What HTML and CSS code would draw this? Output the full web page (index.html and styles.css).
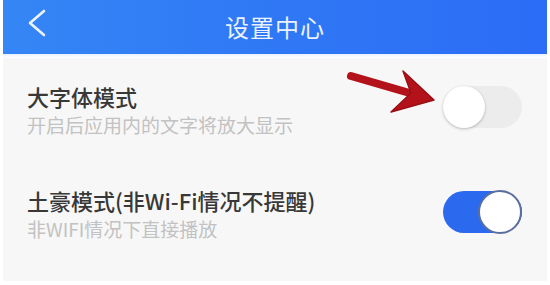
FILE: index.html
```html
<!DOCTYPE html>
<html lang="zh-CN">
<head>
<meta charset="utf-8">
<title>设置中心</title>
<link rel="stylesheet" href="styles.css">
</head>
<body>
<div class="page">
  <header class="topbar">
    <span class="back" aria-label="返回">
      <svg width="20" height="28" viewBox="0 0 20 28"><path d="M17 2 L3 14 L17 26" fill="none" stroke="#eef4ff" stroke-width="2.6" stroke-linecap="round" stroke-linejoin="round"/></svg>
    </span>
    <h1 class="title">设置中心</h1>
  </header>
  <div class="divider"></div>
  <main class="content">
    <div class="row">
      <div class="texts">
        <div class="row-title">大字体模式</div>
        <div class="row-sub">开启后应用内的文字将放大显示</div>
      </div>
      <div class="switch off"><span class="knob"></span></div>
    </div>
    <div class="row">
      <div class="texts">
        <div class="row-title">土豪模式(非Wi-Fi情况不提醒)</div>
        <div class="row-sub">非WIFI情况下直接播放</div>
      </div>
      <div class="switch on"><span class="knob"></span></div>
    </div>
  </main>
  <svg class="arrow" width="95" height="48" viewBox="0 0 95 48">
    <path d="M6 8 L68 26" stroke="#b3121a" stroke-width="8" stroke-linecap="round"/>
    <polygon points="89,32 58,3 66,25 46,44" fill="#b3121a" stroke="#9a0e14" stroke-width="1.5" stroke-linejoin="round"/>
  </svg>
</div>
</body>
</html>
```

FILE: styles.css
```css
html, body {
  margin: 0;
  padding: 0;
  background: #ffffff;
}

.page {
  position: relative;
  width: 550px;
  height: 285px;
  padding: 0 3px;
  box-sizing: border-box;
  font-family: "Noto Sans CJK SC", "Noto Sans", sans-serif;
}

.topbar {
  height: 54px;
  display: flex;
  align-items: center;
  justify-content: center;
  position: relative;
  background: linear-gradient(90deg, #3586f5 0%, #2f78f5 50%, #2c6cf6 100%);
}

.back {
  position: absolute;
  left: 24px;
  top: 9px;
  display: flex;
}

.title {
  margin: 0;
  font-size: 24px;
  font-weight: 400;
  color: #eaf2ff;
  line-height: 54px;
  letter-spacing: 1px;
}

.divider {
  height: 4px;
  background: linear-gradient(#e8f1fc, #ffffff);
}

.content {
  background: #f7f7f7;
  padding-bottom: 15px;
}

.row {
  height: 104px;
  display: flex;
  align-items: center;
  justify-content: space-between;
  padding: 0 25px 0 24px;
}

.texts {
  display: flex;
  flex-direction: column;
  gap: 2px;
}

.row-title {
  font-size: 22px;
  line-height: 30px;
  font-weight: 500;
  color: #383838;
  margin-top: -3px;
}

.row-sub {
  font-size: 19px;
  line-height: 24px;
  color: #c2c2c2;
}

.switch {
  width: 79px;
  height: 42px;
  border-radius: 21px;
  display: flex;
  align-items: center;
  box-sizing: border-box;
}

.switch.off {
  background: #ececec;
  justify-content: flex-start;
  margin-top: -6px;
}

.switch.off .knob {
  width: 42px;
  height: 42px;
  border-radius: 50%;
  background: #ffffff;
  box-shadow: 0 1px 3px rgba(0, 0, 0, 0.25);
}

.switch.on {
  background: #2b69ef;
  justify-content: flex-end;
  margin-top: -4px;
}

.switch.on .knob {
  width: 44px;
  height: 44px;
  border-radius: 50%;
  background: #ffffff;
  border: 2px solid #5a6f9e;
  box-sizing: border-box;
}

.arrow {
  position: absolute;
  left: 345px;
  top: 68px;
}
```
